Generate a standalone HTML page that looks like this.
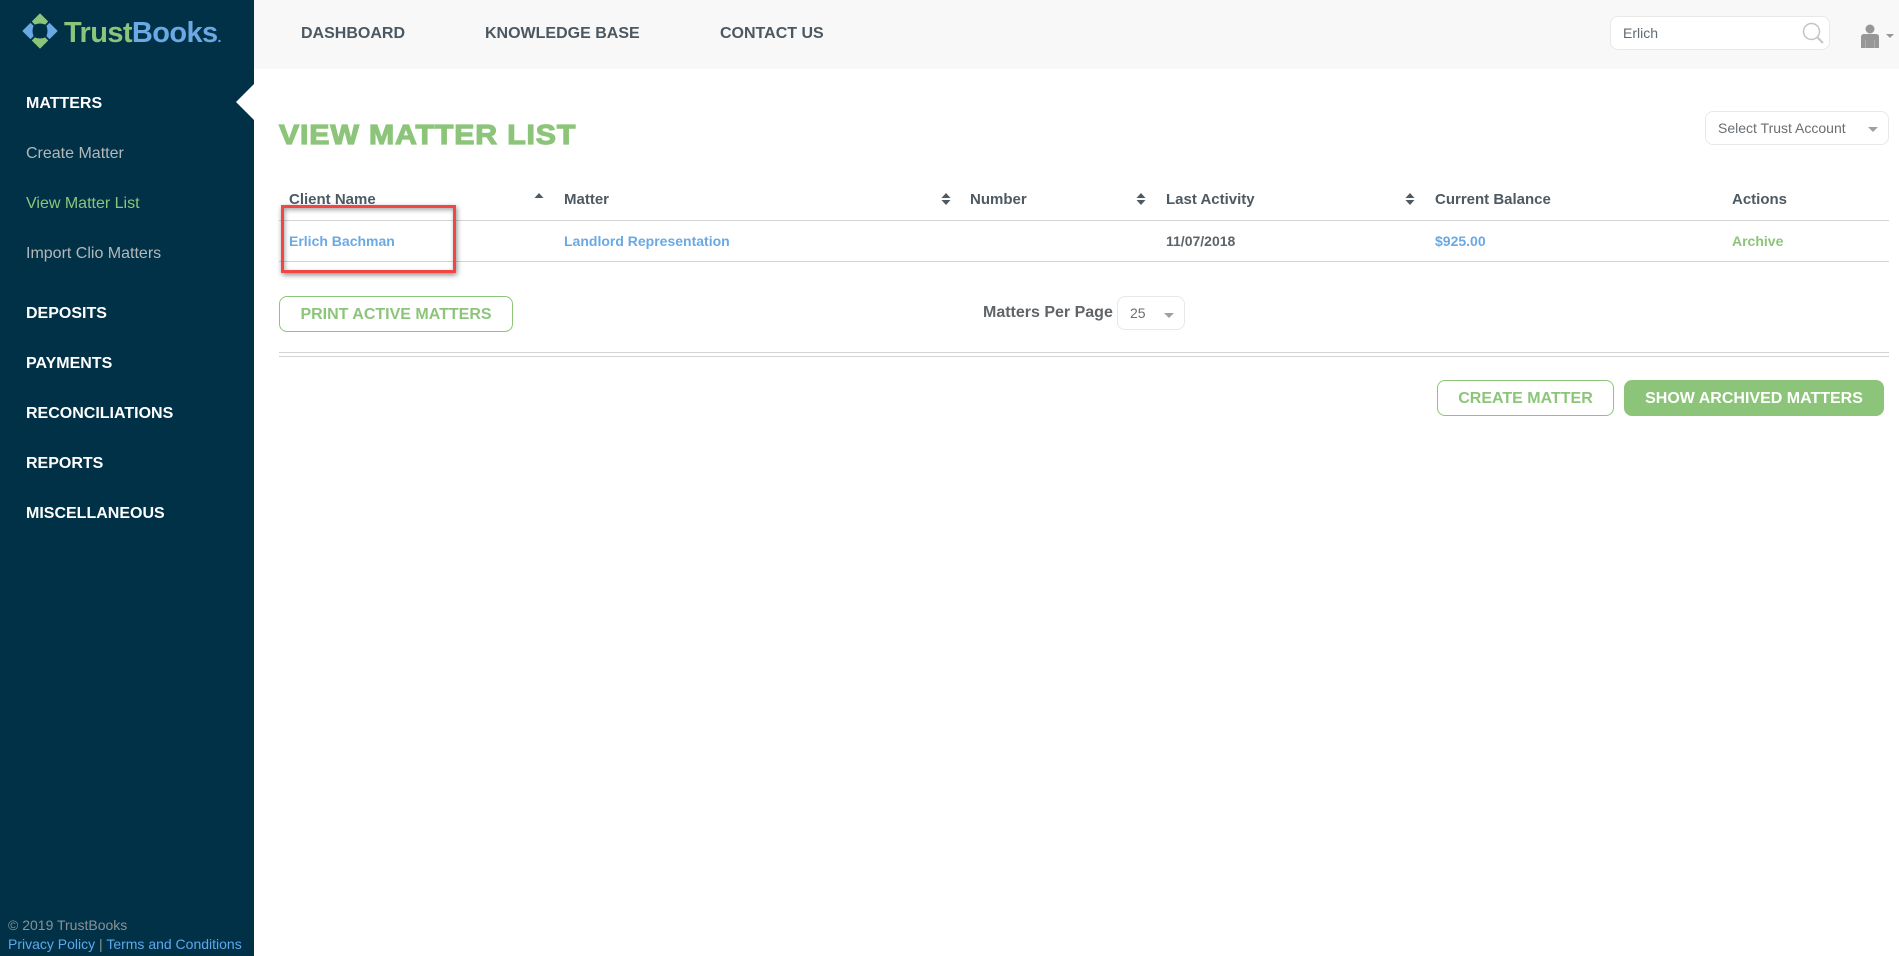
<!DOCTYPE html>
<html lang="en">
<head>
<meta charset="utf-8">
<title>TrustBooks - View Matter List</title>
<style>
html,body{margin:0;padding:0;width:1899px;height:956px;overflow:hidden;background:#fff;font-family:"Liberation Sans",Arial,sans-serif;}
.a{position:absolute;white-space:nowrap;line-height:20px;}
#side{position:absolute;left:0;top:0;width:254px;height:956px;background:#003147;}
#head{position:absolute;left:254px;top:0;width:1645px;height:69px;background:#f8f8f8;}
.nav{font-size:16px;font-weight:bold;color:#4b5861;top:24px;}
.m{left:26px;font-size:16px;font-weight:bold;color:#fff;}
.s{left:26px;font-size:16px;color:#b4b8ba;}
.th{font-size:15px;font-weight:bold;color:#4d5a64;top:190px;}
.td{font-size:14px;font-weight:bold;top:231px;}
.blue{color:#6aa9e4;}
.line{position:absolute;background:#d4d4d4;height:1px;left:279px;width:1610px;}
.btn{position:absolute;box-sizing:border-box;border:1px solid #8cc57a;border-radius:8px;color:#8cc57a;font-size:16px;font-weight:bold;text-align:center;height:36px;line-height:35px;white-space:nowrap;}
.sel{position:absolute;box-sizing:border-box;border:1px solid #e8e8e8;border-radius:8px;background:#fff;}
.car{position:absolute;width:0;height:0;border-left:5px solid transparent;border-right:5px solid transparent;border-top:5px solid #a0a0a0;}
</style>
</head>
<body>
<div id="side"></div>
<div id="head"></div>

<svg class="a" style="left:21px;top:12px" width="38" height="38" viewBox="0 0 38 38">
<g stroke-width="1" stroke-linejoin="round">
<path fill="#8cc57a" stroke="#8cc57a" d="M19 2 L26.5 9.5 L24 12 Q19 10 14 12 L11.5 9.5 Z"/>
<path fill="#8cc57a" stroke="#8cc57a" d="M19 36 L26.5 28.5 L24 26 Q19 28 14 26 L11.5 28.5 Z"/>
<path fill="#6aa9e4" stroke="#6aa9e4" d="M2 19 L9.5 11.5 L12 14 Q10 19 12 24 L9.5 26.5 Z"/>
<path fill="#6aa9e4" stroke="#6aa9e4" d="M36 19 L28.5 11.5 L26 14 Q28 19 26 24 L28.5 26.5 Z"/>
</g>
</svg>
<div class="a" style="left:64px;top:15px;font-size:29px;line-height:36px;font-weight:bold;letter-spacing:-0.6px;color:#8cc57a;">Trust<span style="color:#6aa9e4">Books</span><span style="color:#6aa9e4;font-size:14px">.</span></div>

<div class="a nav" style="left:301px">DASHBOARD</div>
<div class="a nav" style="left:485px">KNOWLEDGE BASE</div>
<div class="a nav" style="left:720px">CONTACT US</div>

<div class="sel" style="left:1610px;top:16px;width:220px;height:34px;"></div>
<div class="a" style="left:1623px;top:23px;font-size:14px;color:#5f6b74;">Erlich</div>
<svg class="a" style="left:1802px;top:22px" width="22" height="22" viewBox="0 0 22 22"><circle cx="9.5" cy="9.5" r="8" fill="none" stroke="#c4c4c4" stroke-width="1.5"/><path d="M15.5 15.5 L21 21" stroke="#c4c4c4" stroke-width="2" fill="none"/></svg>
<svg class="a" style="left:1861px;top:23px" width="18" height="25" viewBox="0 0 18 25"><circle cx="9" cy="6" r="4.5" fill="#979797"/><path d="M0 25 V14 Q0 11 3 11 H15 Q18 11 18 14 V25 Z" fill="#979797"/><path d="M4.5 17 V25 M13.5 17 V25" stroke="#b4b4b4" stroke-width=".8"/></svg>
<div class="car" style="left:1886px;top:34px;border-left-width:4px;border-right-width:4px;border-top:4px solid #979797;"></div>

<div class="a m" style="top:94px">MATTERS</div>
<svg class="a" style="left:236px;top:84px" width="18" height="36"><path d="M18 0 L0 18 L18 36 Z" fill="#fff"/></svg>
<div class="a s" style="top:144px">Create Matter</div>
<div class="a s" style="top:194px;color:#8cc57a">View Matter List</div>
<div class="a s" style="top:244px">Import Clio Matters</div>
<div class="a m" style="top:304px">DEPOSITS</div>
<div class="a m" style="top:354px">PAYMENTS</div>
<div class="a m" style="top:404px">RECONCILIATIONS</div>
<div class="a m" style="top:454px">REPORTS</div>
<div class="a m" style="top:504px">MISCELLANEOUS</div>

<div class="a" style="left:8px;top:915px;font-size:14px;color:#8a9296;">© 2019 TrustBooks</div>
<div class="a" style="left:8px;top:934px;font-size:14px;color:#8a9296;"><span style="color:#5ea8ee">Privacy Policy</span> | <span style="color:#5ea8ee">Terms and Conditions</span></div>

<div class="a" style="left:279px;top:117px;line-height:36px;font-size:28px;font-weight:bold;color:#8cc57a;-webkit-text-stroke:1.2px #8cc57a;letter-spacing:.8px;transform:scaleX(1.08);transform-origin:0 0;">VIEW MATTER LIST</div>

<div class="sel" style="left:1705px;top:111px;width:184px;height:34px;"></div>
<div class="a" style="left:1718px;top:118px;font-size:14px;color:#6a6f73;">Select Trust Account</div>
<div class="car" style="left:1868px;top:127px"></div>

<div class="a th" style="left:289px">Client Name</div>
<div class="a th" style="left:564px">Matter</div>
<div class="a th" style="left:970px">Number</div>
<div class="a th" style="left:1166px">Last Activity</div>
<div class="a th" style="left:1435px">Current Balance</div>
<div class="a th" style="left:1732px">Actions</div>

<svg class="a" style="left:534px;top:192px" width="10" height="7"><path d="M.5 6 L5 1 L9.5 6 Z" fill="#4d5a64"/></svg>
<svg class="a" style="left:941px;top:192px" width="10" height="14"><path d="M.5 6 L5 1 L9.5 6 Z M.5 8 L5 13 L9.5 8 Z" fill="#4d5a64"/></svg>
<svg class="a" style="left:1136px;top:192px" width="10" height="14"><path d="M.5 6 L5 1 L9.5 6 Z M.5 8 L5 13 L9.5 8 Z" fill="#4d5a64"/></svg>
<svg class="a" style="left:1405px;top:192px" width="10" height="14"><path d="M.5 6 L5 1 L9.5 6 Z M.5 8 L5 13 L9.5 8 Z" fill="#4d5a64"/></svg>

<div class="line" style="top:220px"></div>
<div class="line" style="top:261px"></div>

<div class="a td blue" style="left:289px">Erlich Bachman</div>
<div class="a td blue" style="left:564px">Landlord Representation</div>
<div class="a td" style="left:1166px;color:#5f6468">11/07/2018</div>
<div class="a td blue" style="left:1435px">$925.00</div>
<div class="a td" style="left:1732px;color:#8cc57a">Archive</div>

<div style="position:absolute;left:281px;top:205px;width:175px;height:68px;box-sizing:border-box;border:3px solid #f44545;box-shadow:1px 2px 5px rgba(0,0,0,.45),inset 1px 2px 5px rgba(0,0,0,.35);"></div>

<div class="btn" style="left:279px;top:296px;width:234px;">PRINT ACTIVE MATTERS</div>
<div class="a" style="left:983px;top:303px;font-size:16px;font-weight:bold;color:#5f6468;">Matters Per Page</div>
<div class="sel" style="left:1117px;top:296px;width:68px;height:34px;"></div>
<div class="a" style="left:1130px;top:303px;font-size:14px;color:#6a6f73;">25</div>
<div class="car" style="left:1164px;top:313px"></div>

<div class="line" style="top:352px"></div>
<div class="line" style="top:356px"></div>

<div class="btn" style="left:1437px;top:380px;width:177px;">CREATE MATTER</div>
<div class="btn" style="left:1624px;top:380px;width:260px;background:#8cc57a;color:#fff;">SHOW ARCHIVED MATTERS</div>
</body>
</html>
